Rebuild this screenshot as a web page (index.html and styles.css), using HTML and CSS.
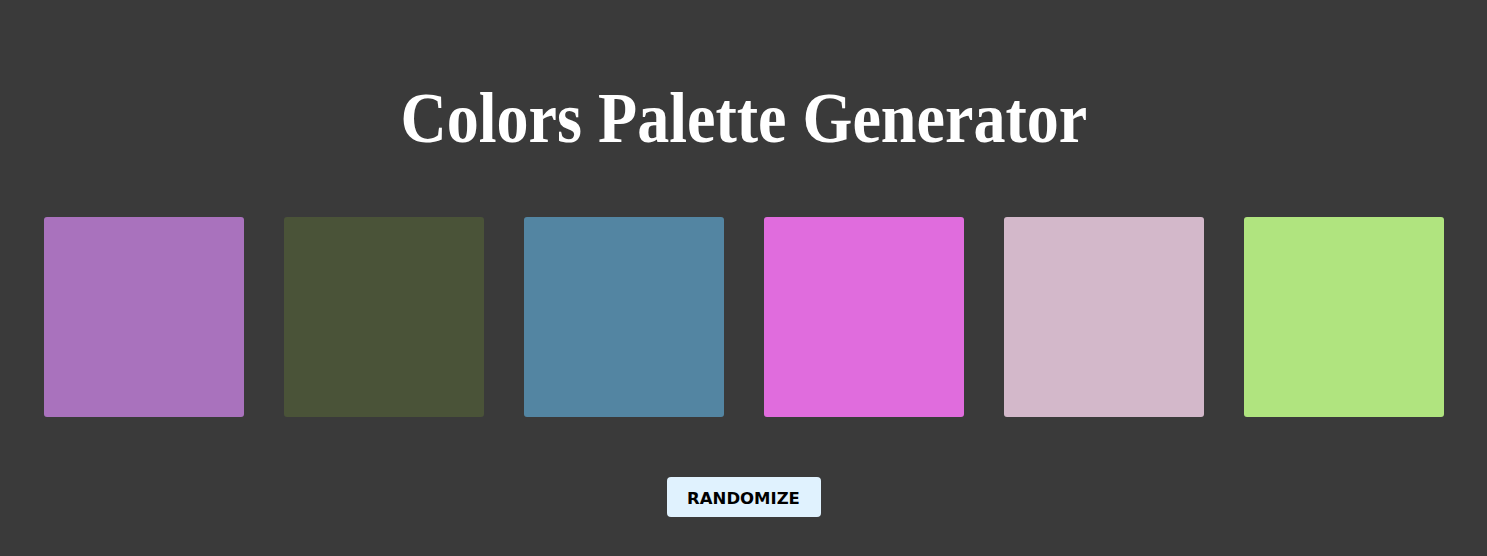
FILE: index.html
```html
<!DOCTYPE html>
<html>
<head>
<meta charset="utf-8">
<link rel="stylesheet" href="styles.css">
</head>
<body>
<main class="app">
  <h1 class="title">Colors Palette Generator</h1>
  <div class="palette">
    <div class="swatch" style="background:#a972bd"></div>
    <div class="swatch" style="background:#4a5338"></div>
    <div class="swatch" style="background:#5385a2"></div>
    <div class="swatch" style="background:#e06cdd"></div>
    <div class="swatch" style="background:#d3b8ca"></div>
    <div class="swatch" style="background:#b0e47f"></div>
  </div>
  <button class="btn">RANDOMIZE</button>
</main>
</body>
</html>
```
FILE: styles.css
```css
html, body {
  margin: 0;
  padding: 0;
  background: #3a3a3a;
  height: 100%;
}
.app {
  display: flex;
  flex-direction: column;
  align-items: center;
}
.title {
  margin: 78px 0 0;
  font-family: "Liberation Serif", serif;
  font-weight: bold;
  font-size: 72px;
  line-height: 80px;
  color: #fff;
  transform: scaleX(0.89);
}
.palette {
  display: flex;
  gap: 40px;
  margin-top: 59px;
}
.swatch {
  width: 200px;
  height: 200px;
  border-radius: 3px;
}
.btn {
  margin-top: 60px;
  width: 154px;
  height: 40px;
  padding: 2px 0 0;
  border: none;
  border-radius: 4px;
  background: #e0f2fe;
  color: #000;
  font-family: "DejaVu Sans", Verdana, sans-serif;
  font-weight: bold;
  font-size: 16.5px;
}
```
